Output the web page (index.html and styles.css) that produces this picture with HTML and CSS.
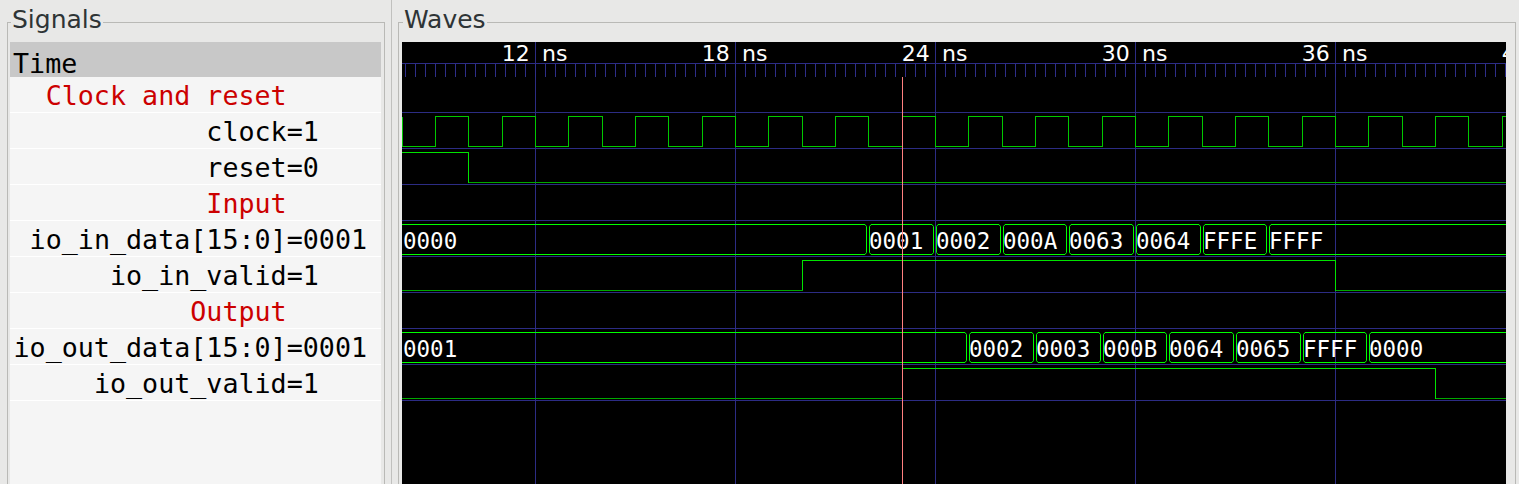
FILE: index.html
```html
<!DOCTYPE html>
<html>
<head>
<meta charset="utf-8">
<title>GTKWave</title>
<link rel="stylesheet" href="styles.css">
</head>
<body>
<div class="pane pane-left">
  <div class="frame frame-signals">
    <div class="legend">Signals</div>
    <div class="list">
      <div class="row time">Time</div>
      <div class="row"><span class="name comment">Clock and reset</span></div>
      <div class="row"><span class="name">clock</span><span class="val">=1</span></div>
      <div class="row"><span class="name">reset</span><span class="val">=0</span></div>
      <div class="row"><span class="name comment">Input</span></div>
      <div class="row"><span class="name">io_in_data[15:0]</span><span class="val">=0001</span></div>
      <div class="row"><span class="name">io_in_valid</span><span class="val">=1</span></div>
      <div class="row"><span class="name comment">Output</span></div>
      <div class="row"><span class="name">io_out_data[15:0]</span><span class="val">=0001</span></div>
      <div class="row"><span class="name">io_out_valid</span><span class="val">=1</span></div>
    </div>
  </div>
</div>
<div class="sep"></div>
<div class="pane pane-right">
  <div class="frame frame-waves">
    <div class="legend">Waves</div>
    <div class="canvas">
      <svg class="waves" width="1104" height="442" viewBox="0 0 1104 442" xmlns="http://www.w3.org/2000/svg">
        <!-- grid -->
        <g class="grid" stroke="#2c2c84" stroke-width="1" fill="none" shape-rendering="crispEdges">
          <path d="M0 21.5 H1104"/>
          <path d="M0 70.5 H1104 M0 106.5 H1104 M0 142.5 H1104 M0 178.5 H1104 M0 214.5 H1104 M0 250.5 H1104 M0 286.5 H1104 M0 322.5 H1104 M0 358.5 H1104"/>
          <path d="M133.5 0 V442 M333.5 0 V442 M533.5 0 V442 M733.5 0 V442 M933.5 0 V442"/>
        </g>
        <path d="M3 28.5 H1104" stroke="#2e2e8a" stroke-width="13" stroke-dasharray="1 9" fill="none" shape-rendering="crispEdges"/>
        <!-- time labels -->
        <g class="tlabel">
          <text x="127.8" y="19" text-anchor="end">12</text><text x="140" y="19">ns</text>
          <text x="327.8" y="19" text-anchor="end">18</text><text x="340" y="19">ns</text>
          <text x="527.8" y="19" text-anchor="end">24</text><text x="540" y="19">ns</text>
          <text x="727.8" y="19" text-anchor="end">30</text><text x="740" y="19">ns</text>
          <text x="927.8" y="19" text-anchor="end">36</text><text x="940" y="19">ns</text>
          <text x="1127.8" y="19" text-anchor="end">42</text>
        </g>
        <!-- clock -->
        <path fill="none" stroke="#00c800" stroke-width="1" shape-rendering="crispEdges" d="M0.5 74.5 V104.5 H33.5 V74.5 H66.5 V104.5 H100.5 V74.5 H133.5 V104.5 H166.5 V74.5 H200.5 V104.5 H233.5 V74.5 H266.5 V104.5 H300.5 V74.5 H333.5 V104.5 H366.5 V74.5 H400.5 V104.5 H433.5 V74.5 H466.5 V104.5 H500.5 V74.5 H533.5 V104.5 H566.5 V74.5 H600.5 V104.5 H633.5 V74.5 H666.5 V104.5 H700.5 V74.5 H733.5 V104.5 H766.5 V74.5 H800.5 V104.5 H833.5 V74.5 H866.5 V104.5 H900.5 V74.5 H933.5 V104.5 H966.5 V74.5 H1000.5 V104.5 H1033.5 V74.5 H1066.5 V104.5 H1100.5 V74.5 H1110"/>
        <!-- single-bit high segments -->
        <path fill="none" stroke="#00e400" stroke-width="1" shape-rendering="crispEdges" d="M0 110.5 H66.5 V140.5 M400.5 248.5 V218.5 H933.5 V248.5 M500.5 356.5 V326.5 H1033.5 V356.5"/>
        <!-- single-bit low segments -->
        <path fill="none" stroke="#00a800" stroke-width="1" shape-rendering="crispEdges" d="M66.5 140.5 H1110 M0 248.5 H400.5 M933.5 248.5 H1110 M0 356.5 H500.5 M1033.5 356.5 H1110"/>
        <!-- io_in_data bus -->
        <path fill="none" stroke="#00ff00" stroke-width="1" d="M0 182.5 H463 L464.5 184.5 V210.5 L463 212.5 H0 M469 182.5 H530 L531.5 184.5 V210.5 L530 212.5 H469 L467.5 210.5 V184.5 Z M536 182.5 H597 L598.5 184.5 V210.5 L597 212.5 H536 L534.5 210.5 V184.5 Z M603 182.5 H663 L664.5 184.5 V210.5 L663 212.5 H603 L601.5 210.5 V184.5 Z M669 182.5 H730 L731.5 184.5 V210.5 L730 212.5 H669 L667.5 210.5 V184.5 Z M736 182.5 H797 L798.5 184.5 V210.5 L797 212.5 H736 L734.5 210.5 V184.5 Z M803 182.5 H863 L864.5 184.5 V210.5 L863 212.5 H803 L801.5 210.5 V184.5 Z M1110 182.5 H869 L867.5 184.5 V210.5 L869 212.5 H1110"/>
        <g class="bval">
          <text x="1" y="207">0000</text>
          <text x="467" y="207">0001</text>
          <text x="534" y="207">0002</text>
          <text x="601" y="207">000A</text>
          <text x="667" y="207">0063</text>
          <text x="734" y="207">0064</text>
          <text x="801" y="207">FFFE</text>
          <text x="867" y="207">FFFF</text>
        </g>
        <!-- io_out_data bus -->
        <path fill="none" stroke="#00ff00" stroke-width="1" d="M0 290.5 H563 L564.5 292.5 V318.5 L563 320.5 H0 M569 290.5 H630 L631.5 292.5 V318.5 L630 320.5 H569 L567.5 318.5 V292.5 Z M636 290.5 H697 L698.5 292.5 V318.5 L697 320.5 H636 L634.5 318.5 V292.5 Z M703 290.5 H763 L764.5 292.5 V318.5 L763 320.5 H703 L701.5 318.5 V292.5 Z M769 290.5 H830 L831.5 292.5 V318.5 L830 320.5 H769 L767.5 318.5 V292.5 Z M836 290.5 H897 L898.5 292.5 V318.5 L897 320.5 H836 L834.5 318.5 V292.5 Z M903 290.5 H963 L964.5 292.5 V318.5 L963 320.5 H903 L901.5 318.5 V292.5 Z M1110 290.5 H969 L967.5 292.5 V318.5 L969 320.5 H1110"/>
        <g class="bval">
          <text x="1" y="315">0001</text>
          <text x="567" y="315">0002</text>
          <text x="634" y="315">0003</text>
          <text x="701" y="315">000B</text>
          <text x="767" y="315">0064</text>
          <text x="834" y="315">0065</text>
          <text x="901" y="315">FFFF</text>
          <text x="967" y="315">0000</text>
        </g>
        <!-- marker -->
        <path stroke="#ff8080" stroke-width="1" shape-rendering="crispEdges" d="M500.5 35 V442"/>
      </svg>
    </div>
  </div>
</div>
</body>
</html>
```

FILE: styles.css
```css
html, body {
  margin: 0;
  padding: 0;
}
body {
  width: 1519px;
  height: 484px;
  overflow: hidden;
  background: #e8e8e7;
  display: flex;
  align-items: stretch;
}
.pane {
  flex: none;
  box-sizing: border-box;
  height: 484px;
}
.pane-left {
  width: 391px;
  padding-left: 7px;
}
.sep {
  flex: none;
  width: 1px;
  height: 484px;
  background: #c0c0be;
}
.pane-right {
  width: 1127px;
  padding-left: 6px;
}
.frame {
  box-sizing: border-box;
  margin-top: 22px;
  height: 462px;
  border: 1px solid #b9b9b6;
  border-bottom: none;
}
.frame-signals {
  width: 378px;
  padding-left: 2px;
  padding-right: 3px;
}
.frame-waves {
  width: 1118px;
  padding-left: 3px;
  padding-right: 9px;
}
.legend {
  display: block;
  width: max-content;
  margin: -18px 0 7px 1px;
  padding: 0 1px;
  background: #e8e8e7;
  font-family: "DejaVu Sans", sans-serif;
  font-size: 25px;
  line-height: 30px;
  color: #2e3436;
}
.frame-waves .legend {
  margin-left: 1px;
}
.list {
  background: #f5f5f5;
  height: 442px;
  font-family: "DejaVu Sans Mono", monospace;
  font-size: 26.7px;
  color: #000;
}
.row {
  display: flex;
  height: 32px;
  padding-top: 3px;
  padding-left: 3.5px;
  line-height: 32px;
  border-bottom: 1px solid #ffffff;
  white-space: pre;
}
.row.time {
  background: #c8c8c8;
  height: 27px;
  padding-top: 8px;
  padding-left: 3px;
  line-height: 27px;
  border-bottom: none;
}
.name {
  flex: none;
  width: 273.2px;
  text-align: right;
}
.comment {
  color: #cc0000;
}
.val {
  flex: none;
}
.canvas {
  width: 1104px;
  height: 442px;
  background: #000;
  overflow: hidden;
}
.waves {
  display: block;
}
.tlabel text {
  font-family: "DejaVu Sans", sans-serif;
  font-size: 22px;
  fill: #ffffff;
}
.bval text {
  font-family: "DejaVu Sans Mono", monospace;
  font-size: 22.5px;
  fill: #ffffff;
}
```
